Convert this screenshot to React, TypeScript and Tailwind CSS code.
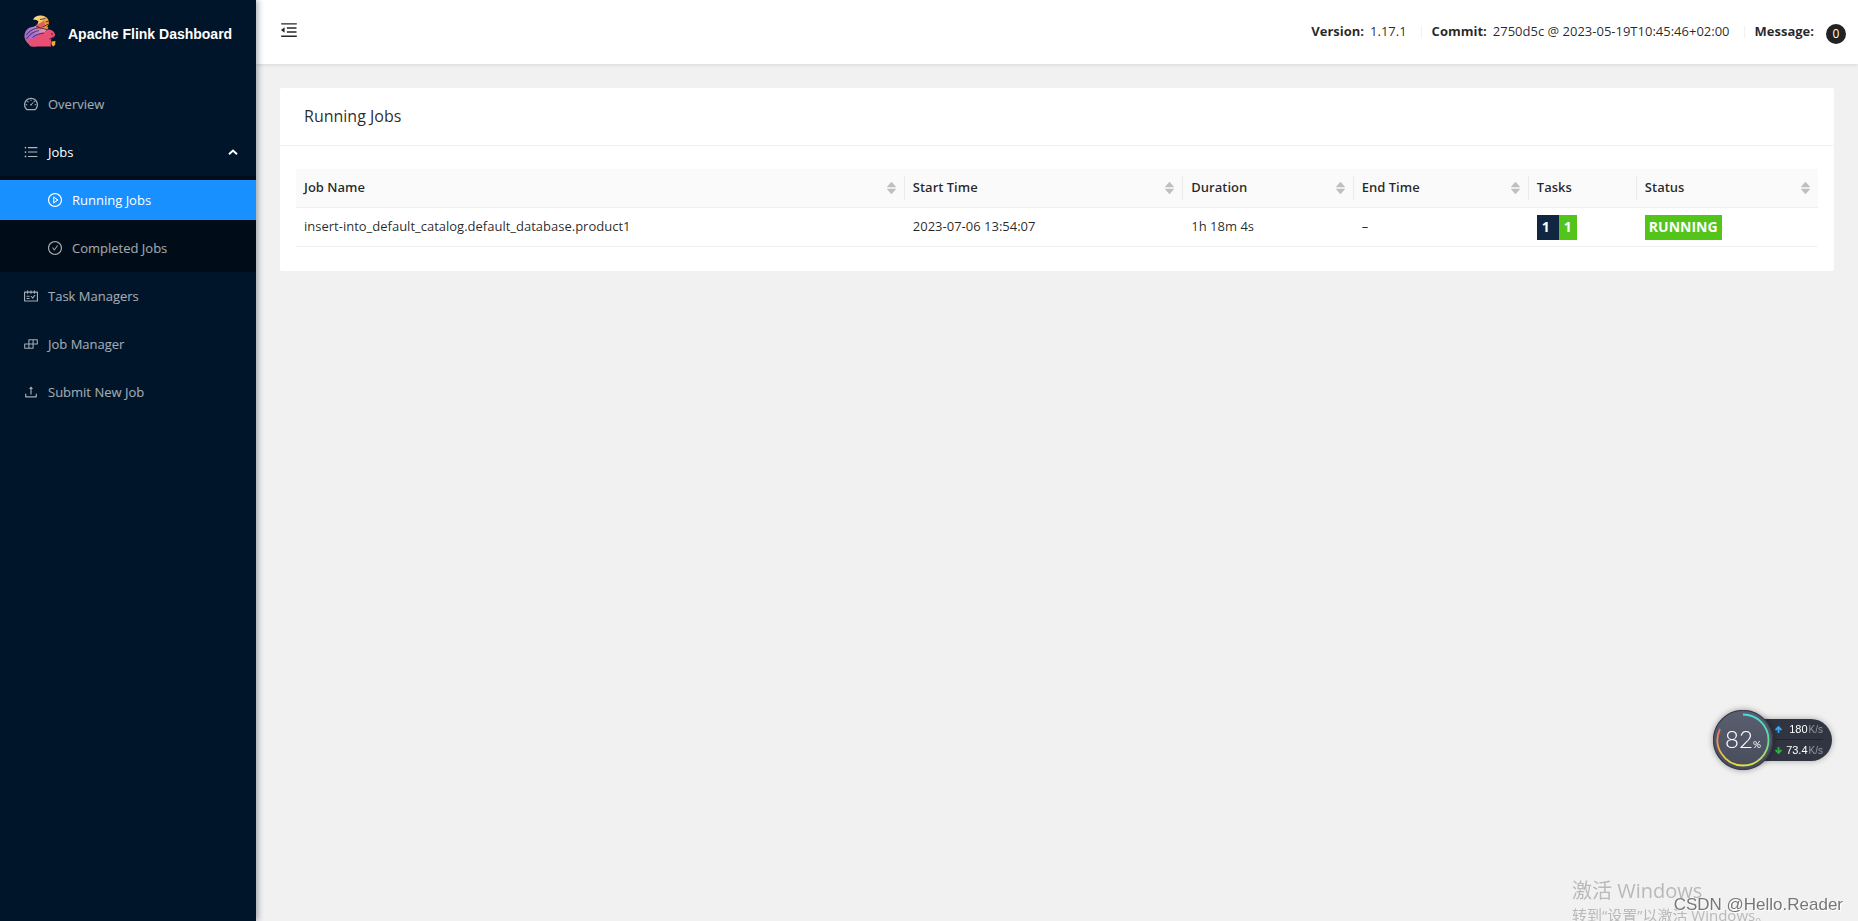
import type { ReactNode } from "react";
import {
  AiFillCaretDown,
  AiFillCaretUp,
  AiOutlineBuild,
  AiOutlineCheckCircle,
  AiOutlineDashboard,
  AiOutlineMenuFold,
  AiOutlinePlayCircle,
  AiOutlineSchedule,
  AiOutlineUnorderedList,
  AiOutlineUpload,
} from "react-icons/ai";

function FlinkLogo() {
  return (
    <svg viewBox="0 0 32 32" className="h-8 w-8 shrink-0" aria-hidden="true">
      <defs>
        <linearGradient id="tail" x1="0.1" y1="0.9" x2="0.9" y2="0.1">
          <stop offset="0" stopColor="#c45fb0" />
          <stop offset="0.45" stopColor="#a06fd8" />
          <stop offset="0.75" stopColor="#d58fc0" />
          <stop offset="1" stopColor="#f0a48c" />
        </linearGradient>
        <linearGradient id="plume" x1="0" y1="0" x2="1" y2="0.5">
          <stop offset="0" stopColor="#fbe3a4" />
          <stop offset="0.55" stopColor="#f7c76a" />
          <stop offset="1" stopColor="#e88a1c" />
        </linearGradient>
      </defs>
      <path d="M9 31.500C3 29 0 24.500 0.500 20C1 15.500 4 12.500 8.500 12C11 11.500 12 10.500 13.500 9L24.500 12.500L20.500 18L12 24L12.500 31.500Z" fill="url(#tail)" />
      <path d="M9 4.500C10.500 1.500 13.500 .3 17 .5C22 .8 25.500 4 25 8.500L22.500 13.500L17.500 14.500C14.500 14 13 12 13.500 9L14.500 6.500L12.500 5Z" fill="url(#plume)" />
      <path d="M13 9C16 8.500 18.500 7 20 5L21 10L16.500 15L12 13Z" fill="#e0605c" />
      <path d="M7 31.500C4 29.500 3 26 4.500 23.500C7 26 10 23 13.500 20.500C17 17.500 21 18 23.500 14.500C26 14.300 30 15.500 31 19C31.500 20.500 30.500 21.500 28.500 22.500C26.500 23.500 27.500 25 27 27C26.800 29 26.500 30 27 31.500Z" fill="#e94f72" />
      <path d="M2.500 20C5.500 15.500 10 13.500 14.500 13M2.500 24C6 18.500 10.500 16.500 15 15.500M8.500 22.500C12 19.500 16 18.500 20 18M12 11C15 12.500 18 13.500 23 14.500M16 4.500L21.500 3.500M21.500 7L25 6M18.500 12L24.500 9" fill="none" stroke="#251b48" strokeWidth="0.8" />
      <path d="M27 19H29M25.500 24C27.500 23.500 29 22.500 31 22.500" fill="none" stroke="#4d1731" strokeWidth="1" />
      <path d="M27.500 26.500L31.500 26L31 30L29 31.500L27.500 29.500Z" fill="#f3ac35" />
    </svg>
  );
}

function NavLink({
  icon,
  label,
  nested = false,
  active = false,
}: {
  icon: ReactNode;
  label: string;
  nested?: boolean;
  active?: boolean;
}) {
  return (
    <a
      href="#"
      aria-current={active ? "page" : undefined}
      className={`flex h-10 items-center gap-[9px] ${nested ? "pl-[47px]" : "pl-[23px]"} ${
        active ? "bg-[#1890ff] text-white" : "text-white/65 hover:text-white"
      }`}
    >
      {icon}
      <span className="pt-px">{label}</span>
    </a>
  );
}

function Sidebar() {
  return (
    <aside className="relative z-20 w-64 shrink-0 bg-[#001529] text-[13px] shadow-[2px_0_6px_rgba(0,21,41,0.35)]">
      <a href="#" className="flex h-16 items-center gap-3 pl-6 text-white">
        <div className="pb-0.5">
          <FlinkLogo />
        </div>
        <h1 className="pt-1 font-['Liberation_Sans',sans-serif] text-sm font-bold">
          Apache Flink Dashboard
        </h1>
      </a>
      <nav className="mt-5 flex flex-col gap-2">
        <NavLink icon={<AiOutlineDashboard size={16} />} label="Overview" />
        <div>
          <button type="button" aria-expanded="true" className="flex h-10 w-full items-center gap-[9px] pr-4.5 pl-[23px] text-white">
            <AiOutlineUnorderedList size={16} className="opacity-70" />
            <span className="grow pt-px text-left">Jobs</span>
            <svg viewBox="0 0 10 6" className="h-1.5 w-2.5" fill="none" stroke="currentColor" strokeWidth="2" aria-hidden="true">
              <path d="M1 5.200L5 1.500L9 5.200" />
            </svg>
          </button>
          <div className="mt-1 -mb-1 flex flex-col gap-2 bg-[#000c17] py-1">
            <NavLink nested active icon={<AiOutlinePlayCircle size={16} />} label="Running Jobs" />
            <NavLink nested icon={<AiOutlineCheckCircle size={16} />} label="Completed Jobs" />
          </div>
        </div>
        <NavLink icon={<AiOutlineSchedule size={16} />} label="Task Managers" />
        <NavLink icon={<AiOutlineBuild size={16} />} label="Job Manager" />
        <NavLink icon={<AiOutlineUpload size={16} />} label="Submit New Job" />
      </nav>
    </aside>
  );
}

function TopBar() {
  return (
    <header className="relative z-10 flex h-16 items-center justify-between bg-white pr-3 pl-[23px] shadow-[0_1px_4px_rgba(0,21,41,0.12)]">
      <button type="button" aria-label="Collapse menu" className="pb-1">
        <AiOutlineMenuFold size={20} />
      </button>
      <div className="flex items-center text-[13px]">
        <span className="flex gap-1.5"><strong>Version:</strong> 1.17.1</span>
        <span className="mr-2.5 ml-3.5 h-3 w-px bg-black/6" />
        <span className="flex gap-1.5"><strong>Commit:</strong> 2750d5c @ 2023-05-19T10:45:46+02:00</span>
        <span className="mr-2.5 ml-3.5 h-3 w-px bg-black/6" />
        <strong>Message:</strong>
        <span className="mt-1 ml-3 flex size-5 items-center justify-center rounded-full bg-[#222] text-xs text-white">0</span>
      </div>
    </header>
  );
}

const columns = [
  { title: "Job Name", width: "w-[40%]", sortable: true },
  { title: "Start Time", width: "w-[18.3%]", sortable: true },
  { title: "Duration", width: "w-[11.2%]", sortable: true },
  { title: "End Time", width: "w-[11.5%]", sortable: true },
  { title: "Tasks", width: "w-[7.1%]", sortable: false },
  { title: "Status", width: "w-[11.9%]", sortable: true },
];

function JobsTable() {
  return (
    <table className="w-full table-fixed border-separate border-spacing-0 text-left">
      <thead>
        <tr className="h-[39px] bg-[#fafafa]">
          {columns.map((column, index) => (
            <th key={column.title} scope="col" className={`${column.width} border-b border-[#f0f0f0] p-0 font-semibold`}>
              <div
                className={`flex h-6 items-center justify-between px-2 ${
                  index < columns.length - 1 ? "border-r border-black/6" : ""
                }`}
              >
                {column.title}
                {column.sortable && (
                  <button type="button" aria-label={`Sort by ${column.title}`} className="-mr-0.5 flex flex-col items-center text-[#bfbfbf]">
                    <AiFillCaretUp size={13} />
                    <AiFillCaretDown size={13} className="-mt-1.5" />
                  </button>
                )}
              </div>
            </th>
          ))}
        </tr>
      </thead>
      <tbody className="[&_td]:border-b [&_td]:border-[#f0f0f0] [&_td]:px-2 [&_td]:py-0">
        <tr className="h-[39px]">
          <td>insert-into_default_catalog.default_database.product1</td>
          <td>2023-07-06 13:54:07</td>
          <td>1h 18m 4s</td>
          <td>–</td>
          <td>
            <div className="flex text-sm font-bold text-white">
              <span className="flex h-[25px] w-[22px] items-center bg-[#112641] pl-[5px]">1</span>
              <span className="flex h-[25px] w-[18px] items-center bg-[#52c41a] pl-[5px]">1</span>
            </div>
          </td>
          <td>
            <span className="flex h-[25px] w-fit items-center bg-[#52c41a] px-1 text-sm font-bold text-white">RUNNING</span>
          </td>
        </tr>
      </tbody>
    </table>
  );
}

function NetworkWidget() {
  return (
    <div className="fixed right-[26px] bottom-[151px] z-30 flex items-center font-['Liberation_Sans',sans-serif] text-white">
      <div className="relative z-10 flex size-15 items-center justify-center rounded-full bg-linear-to-b from-[#5b6070] to-[#474c5b] shadow-[0_0_6px_rgba(0,0,0,0.4)]">
        <svg viewBox="0 0 60 60" fill="none" className="absolute inset-0 size-15" aria-hidden="true">
          <defs>
            <linearGradient id="gaugeRight" x1="0" y1="0" x2="0" y2="1">
              <stop offset="0" stopColor="#45e0e0" />
              <stop offset="0.5" stopColor="#62d9a0" />
              <stop offset="1" stopColor="#dce34b" />
            </linearGradient>
            <linearGradient id="gaugeLeft" x1="0" y1="0" x2="0" y2="1">
              <stop offset="0" stopColor="#f0715a" />
              <stop offset="0.5" stopColor="#eda451" />
              <stop offset="1" stopColor="#e9df42" />
            </linearGradient>
          </defs>
          <circle cx="30" cy="30" r="29.500" stroke="#383c49" strokeWidth="1.200" />
          <path d="M30 4.500A25.500 25.500 0 0 1 30 55.500" stroke="url(#gaugeRight)" strokeWidth="1.800" />
          <path d="M30 55.500A25.500 25.500 0 0 1 7 19" stroke="url(#gaugeLeft)" strokeWidth="1.800" />
        </svg>
        <span className="flex items-baseline pb-0.5 font-['Lato',sans-serif] text-2xl font-light">
          82<small className="text-[10px] font-normal">%</small>
        </span>
      </div>
      <div className="-ml-8 grid h-[42px] w-[91px] grid-rows-2 divide-y divide-[#22262f] rounded-r-full bg-[#313541] pr-[9px] pl-[34px] shadow-[0_0_6px_rgba(0,0,0,0.3)]">
        <NetworkRate color="text-[#3da5ee]" up value="180" />
        <NetworkRate color="text-[#26b53a]" value="73.4" />
      </div>
    </div>
  );
}

function NetworkRate({ color, value, up = false }: { color: string; value: string; up?: boolean }) {
  return (
    <div className="flex items-center justify-between">
      <svg viewBox="0 0 7 7" className={`size-[7px] ${color}`} fill="none" stroke="currentColor" strokeWidth="1.800" aria-hidden="true">
        <path d={up ? "M3.500 7V1M.5 4L3.500 1L6.500 4" : "M3.500 0V6M.5 3L3.500 6L6.500 3"} />
      </svg>
      <span className="flex items-baseline gap-px text-[11px]">
        {value}
        <small className="text-[10px] text-[#9599a3]">K/s</small>
      </span>
    </div>
  );
}

function Watermarks() {
  return (
    <div className="pointer-events-none fixed right-0 bottom-0 z-30 h-11 w-[286px] overflow-hidden">
      <div className="font-['Open_Sans','Noto_Sans_CJK_SC',sans-serif] whitespace-nowrap text-[#b9b9b9]">
        <p className="text-xl leading-7">激活 Windows</p>
        <p className="text-[15px] leading-5">转到“设置”以激活 Windows。</p>
      </div>
      <p className="absolute right-[15px] bottom-1 font-['Liberation_Sans',sans-serif] text-[17px] leading-6 whitespace-nowrap text-[#777] [text-shadow:1px_1px_0_#fff]">
        CSDN @Hello.Reader
      </p>
    </div>
  );
}

export default function App() {
  return (
    <div className="flex min-h-screen bg-[#f1f1f1] font-['Open_Sans','Noto_Sans',sans-serif] text-[13px] text-black/85">
      <Sidebar />
      <div className="min-w-0 grow">
        <TopBar />
        <main className="p-6">
          <section className="rounded-xs bg-white">
            <h2 className="border-b border-[#f0f0f0] px-6 pt-4 pb-[17px] text-base leading-6 font-medium">Running Jobs</h2>
            <div className="px-4 pt-[23px] pb-6">
              <JobsTable />
            </div>
          </section>
        </main>
      </div>
      <NetworkWidget />
      <Watermarks />
    </div>
  );
}
